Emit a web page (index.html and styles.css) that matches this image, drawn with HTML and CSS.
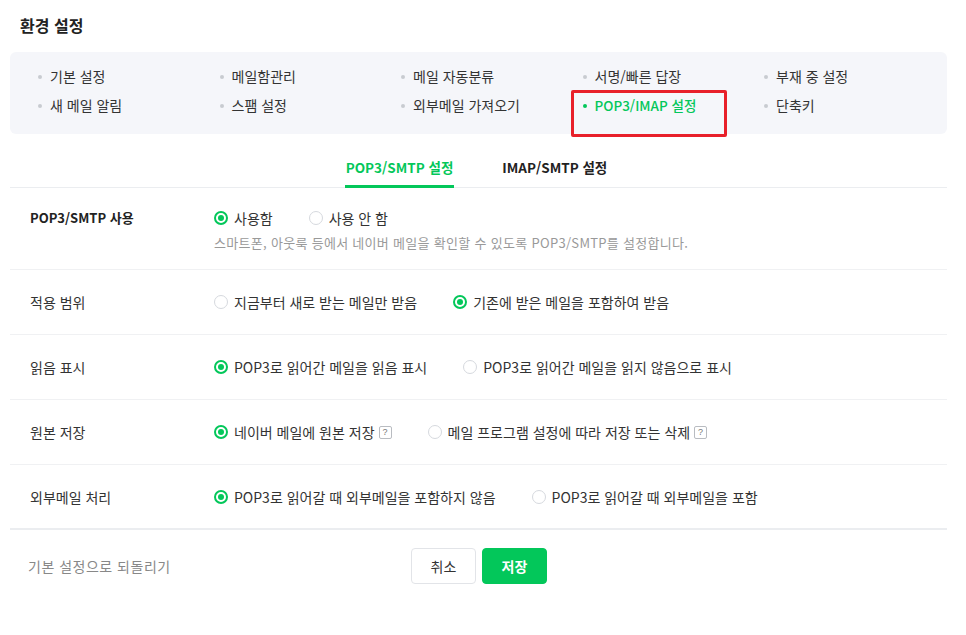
FILE: index.html
```html
<!DOCTYPE html>
<html lang="ko">
<head>
<meta charset="utf-8">
<link rel="stylesheet" href="styles.css">
</head>
<body>
<div class="page">
  <h1 class="title">환경 설정</h1>
  <div class="menu">
    <ul class="menu-grid">
      <li>기본 설정</li>
      <li>메일함관리</li>
      <li>메일 자동분류</li>
      <li>서명/빠른 답장</li>
      <li>부재 중 설정</li>
      <li>새 메일 알림</li>
      <li>스팸 설정</li>
      <li>외부메일 가져오기</li>
      <li class="active">POP3/IMAP 설정</li>
      <li>단축키</li>
    </ul>
    <div class="highlight"></div>
  </div>

  <div class="tabs">
    <div class="tab on">POP3/SMTP 설정</div>
    <div class="tab">IMAP/SMTP 설정</div>
  </div>

  <div class="rows">
    <div class="row first">
      <div class="label bold">POP3/SMTP 사용</div>
      <div class="opts">
        <div class="opt-line">
          <label class="opt"><span class="radio on"></span>사용함</label>
          <label class="opt"><span class="radio"></span>사용 안 함</label>
        </div>
        <p class="desc">스마트폰, 아웃룩 등에서 네이버 메일을 확인할 수 있도록 POP3/SMTP를 설정합니다.</p>
      </div>
    </div>
    <div class="row">
      <div class="label">적용 범위</div>
      <div class="opts"><div class="opt-line">
        <label class="opt"><span class="radio"></span>지금부터 새로 받는 메일만 받음</label>
        <label class="opt"><span class="radio on"></span>기존에 받은 메일을 포함하여 받음</label>
      </div></div>
    </div>
    <div class="row">
      <div class="label">읽음 표시</div>
      <div class="opts"><div class="opt-line">
        <label class="opt"><span class="radio on"></span>POP3로 읽어간 메일을 읽음 표시</label>
        <label class="opt"><span class="radio"></span>POP3로 읽어간 메일을 읽지 않음으로 표시</label>
      </div></div>
    </div>
    <div class="row">
      <div class="label">원본 저장</div>
      <div class="opts"><div class="opt-line">
        <label class="opt"><span class="radio on"></span>네이버 메일에 원본 저장<span class="help">?</span></label>
        <label class="opt"><span class="radio"></span>메일 프로그램 설정에 따라 저장 또는 삭제<span class="help">?</span></label>
      </div></div>
    </div>
    <div class="row last">
      <div class="label">외부메일 처리</div>
      <div class="opts"><div class="opt-line">
        <label class="opt"><span class="radio on"></span>POP3로 읽어갈 때 외부메일을 포함하지 않음</label>
        <label class="opt"><span class="radio"></span>POP3로 읽어갈 때 외부메일을 포함</label>
      </div></div>
    </div>
  </div>

  <div class="footer">
    <span class="reset">기본 설정으로 되돌리기</span>
    <div class="btns">
      <button class="btn cancel">취소</button>
      <button class="btn save">저장</button>
    </div>
  </div>
</div>
</body>
</html>
```

FILE: styles.css
```css
* { box-sizing: border-box; }
html, body { margin: 0; padding: 0; background: #fff; }
body {
  font-family: "Noto Sans CJK KR", "Noto Sans", sans-serif;
  color: #333;
  font-size: 14px;
}
.page {
  width: 937px;
  margin-left: 10px;
}
.title {
  margin: 0;
  padding: 14px 0 0 10px;
  height: 52px;
  font-size: 16px;
  font-weight: 700;
  line-height: 22px;
  color: #222;
}
.menu {
  position: relative;
  background: #f5f6fa;
  border-radius: 6px;
  height: 82px;
  padding: 10px 0 0 28px;
}
.menu-grid {
  list-style: none;
  margin: 0;
  padding: 0;
  display: grid;
  grid-template-columns: repeat(5, 181.5px);
  grid-auto-rows: 29px;
}
.menu-grid li {
  display: flex;
  align-items: center;
  font-size: 14px;
  color: #333;
  line-height: 29px;
}
.menu-grid li::before {
  content: "";
  width: 4px;
  height: 4px;
  border-radius: 50%;
  background: #c8cbd0;
  margin-right: 8px;
}
.menu-grid li.active {
  color: #03c75a;
  font-size: 13.5px;
  font-weight: 500;
}
.menu-grid li.active::before { background: #03c75a; }
.highlight {
  position: absolute;
  left: 561px;
  top: 38px;
  width: 156px;
  height: 47px;
  border: 3px solid #e8202a;
  border-radius: 2px;
}
.tabs {
  display: flex;
  justify-content: center;
  gap: 47px;
  margin-top: 17px;
  border-bottom: 1px solid #ebedf0;
  padding-right: 4px;
}
.tab {
  font-size: 13.5px;
  font-weight: 700;
  color: #222;
  height: 36px;
  line-height: 30px;
  padding: 0 1px;
  border-bottom: 3px solid transparent;
  position: relative;
  top: 1px;
}
.tab.on {
  color: #03c75a;
  border-bottom-color: #03c75a;
}
.row {
  display: flex;
  align-items: center;
  height: 65px;
  border-bottom: 1px solid #f0f1f3;
  padding-left: 20px;
}
.row.first {
  height: 82px;
  align-items: flex-start;
  padding-top: 20px;
}
.row.last { border-bottom: 2px solid #ebedf0; }
.label {
  width: 184px;
  flex-shrink: 0;
  font-size: 14px;
  color: #333;
  line-height: 20px;
}
.label.bold { font-weight: 700; color: #222; font-size: 13px; }
.opts { display: flex; flex-direction: column; }
.opt-line { display: flex; align-items: center; gap: 36px; }
.opt {
  display: flex;
  align-items: center;
  font-size: 14px;
  color: #333;
  line-height: 20px;
}
.radio {
  width: 14px;
  height: 14px;
  border-radius: 50%;
  border: 1px solid #d6d9de;
  background: #fff;
  margin-right: 6px;
  position: relative;
  flex-shrink: 0;
}
.radio.on { border: 2px solid #03c75a; }
.radio.on::after {
  content: "";
  position: absolute;
  left: 2px;
  top: 2px;
  width: 6px;
  height: 6px;
  border-radius: 50%;
  background: #03c75a;
}
.help {
  display: inline-flex;
  align-items: center;
  justify-content: center;
  width: 13px;
  height: 13px;
  margin-left: 4px;
  border: 1px solid #b9bcc1;
  border-radius: 2px;
  font-size: 9px;
  line-height: 1;
  color: #777;
  font-family: "Liberation Sans", sans-serif;
}
.desc {
  margin: 6px 0 0;
  font-size: 13px;
  letter-spacing: 0.3px;
  color: #999;
  line-height: 18px;
}
.footer {
  display: flex;
  align-items: center;
  height: 72px;
  padding-left: 18px;
}
.reset {
  width: 383px;
  font-size: 14px;
  letter-spacing: 0.5px;
  color: #888;
}
.btns { display: flex; gap: 6px; }
.btn {
  width: 65px;
  height: 36px;
  border-radius: 4px;
  font-family: "Noto Sans CJK KR", "Noto Sans", sans-serif;
  font-size: 14px;
  cursor: pointer;
}
.btn.cancel {
  background: #fff;
  border: 1px solid #e2e4e8;
  color: #333;
}
.btn.save {
  background: #03c75a;
  border: 1px solid #03c75a;
  color: #fff;
  font-weight: 700;
}
```
